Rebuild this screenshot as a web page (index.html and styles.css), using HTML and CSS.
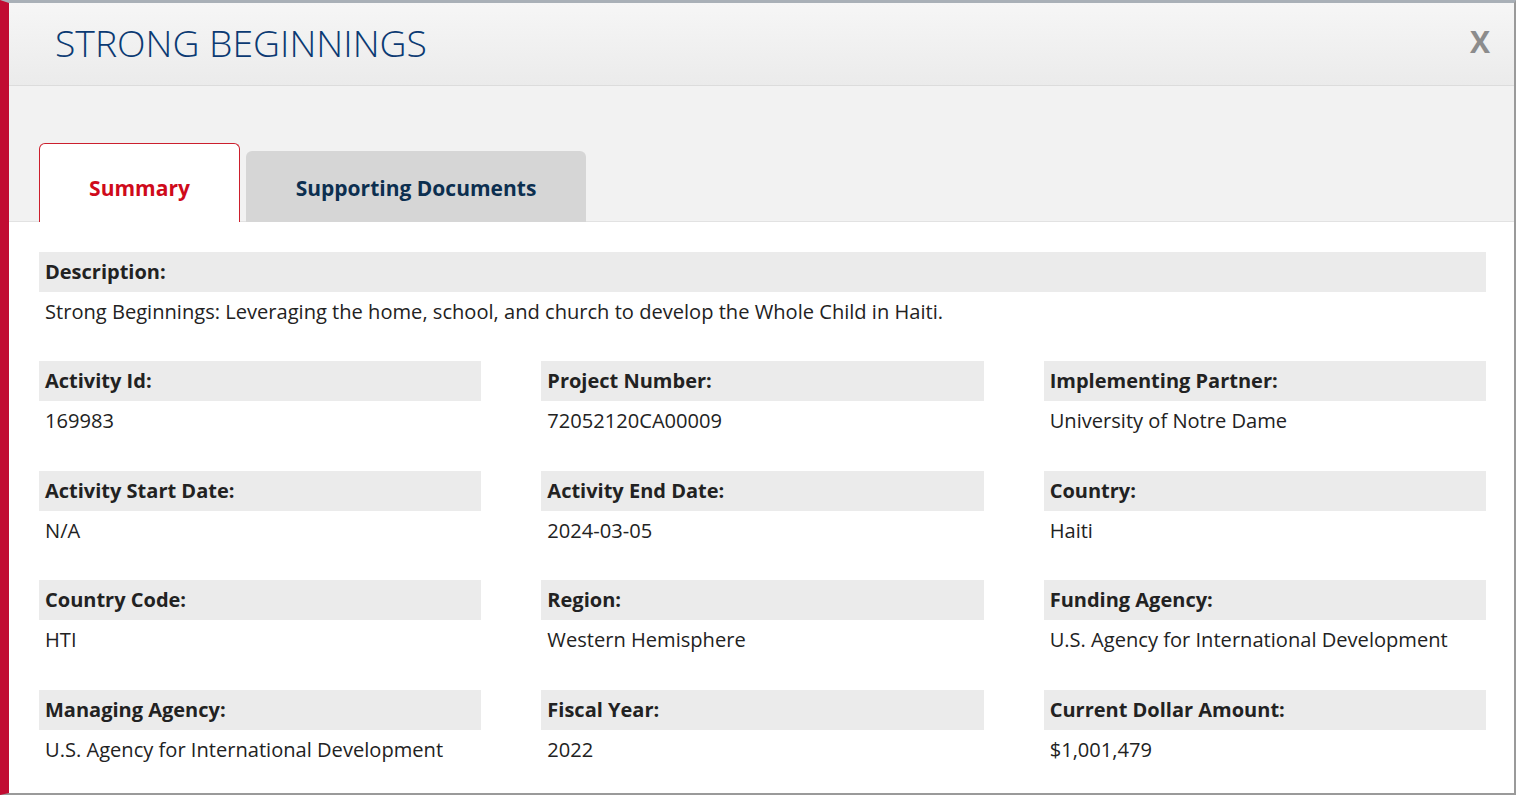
FILE: index.html
```html
<!DOCTYPE html>
<html lang="en">
<head>
    <meta charset="UTF-8">
    <meta name="viewport" content="width=device-width, initial-scale=1.0">
    <title>Strong Beginnings</title>
    <link rel="stylesheet" href="styles.css">
</head>
<body>
    <div class="modal">
        <div class="modal-header">
            <h1>STRONG BEGINNINGS</h1>
            <span class="close-btn">X</span>
        </div>

        <div class="tab-bar">
            <div class="tab active">Summary</div>
            <div class="tab docs">Supporting Documents</div>
        </div>

        <div class="tab-content">
            <div class="field description">
                <div class="field-label">Description:</div>
                <div class="field-value">Strong Beginnings: Leveraging the home, school, and church to develop the Whole Child in Haiti.</div>
            </div>

            <div class="field-grid">
                <div class="field">
                    <div class="field-label">Activity Id:</div>
                    <div class="field-value">169983</div>
                </div>
                <div class="field">
                    <div class="field-label">Project Number:</div>
                    <div class="field-value">72052120CA00009</div>
                </div>
                <div class="field">
                    <div class="field-label">Implementing Partner:</div>
                    <div class="field-value">University of Notre Dame</div>
                </div>

                <div class="field">
                    <div class="field-label">Activity Start Date:</div>
                    <div class="field-value">N/A</div>
                </div>
                <div class="field">
                    <div class="field-label">Activity End Date:</div>
                    <div class="field-value">2024-03-05</div>
                </div>
                <div class="field">
                    <div class="field-label">Country:</div>
                    <div class="field-value">Haiti</div>
                </div>

                <div class="field">
                    <div class="field-label">Country Code:</div>
                    <div class="field-value">HTI</div>
                </div>
                <div class="field">
                    <div class="field-label">Region:</div>
                    <div class="field-value">Western Hemisphere</div>
                </div>
                <div class="field">
                    <div class="field-label">Funding Agency:</div>
                    <div class="field-value">U.S. Agency for International Development</div>
                </div>

                <div class="field">
                    <div class="field-label">Managing Agency:</div>
                    <div class="field-value">U.S. Agency for International Development</div>
                </div>
                <div class="field">
                    <div class="field-label">Fiscal Year:</div>
                    <div class="field-value">2022</div>
                </div>
                <div class="field">
                    <div class="field-label">Current Dollar Amount:</div>
                    <div class="field-value">$1,001,479</div>
                </div>
            </div>
        </div>
    </div>
</body>
</html>
```
FILE: styles.css
```css
* {
    box-sizing: border-box;
}
body {
    margin: 0;
    background-color: #fff;
    font-family: "Open Sans", "Noto Sans", sans-serif;
    color: #222;
}
.modal {
    height: 795px;
    overflow: hidden;
    background-color: #fff;
    border-top: 3px solid #a9b0b7;
    border-left: 9px solid #c10c32;
    border-right: 2px solid #9a9a9a;
    border-bottom: 2px solid #9a9a9a;
}
.modal-header {
    display: flex;
    align-items: center;
    justify-content: space-between;
    height: 83px;
    padding: 0 24px 4px 46px;
    background: linear-gradient(#f6f6f6, #ebebeb);
    border-bottom: 1px solid #dcdcdc;
}
.modal-header h1 {
    margin: 0;
    font-size: 37.3px;
    font-weight: 300;
    color: #0b3a73;
}
.close-btn {
    font-size: 30px;
    font-weight: 700;
    color: #8c8c8c;
    cursor: pointer;
    margin-top: -2px;
}
.tab-bar {
    display: flex;
    align-items: flex-end;
    gap: 6px;
    height: 136px;
    padding-left: 30px;
    background-color: #f2f2f2;
    border-bottom: 1px solid #e2e2e2;
}
.tab {
    display: flex;
    align-items: flex-end;
    justify-content: center;
    font-size: 21px;
    font-weight: 700;
    line-height: 30px;
    padding-bottom: 19px;
    border-radius: 6px 6px 0 0;
    margin-bottom: -1px;
    cursor: pointer;
}
.tab.active {
    width: 201px;
    height: 79px;
    background-color: #fff;
    color: #cf0a1b;
    border: 1px solid #cc1f2d;
    border-bottom: none;
}
.tab.docs {
    width: 340px;
    height: 71px;
    background-color: #d6d6d6;
    color: #0c2f50;
}
.tab-content {
    padding: 30px 28px 0 30px;
}
.field {
    margin-bottom: 36.7px;
}
.field.description {
    margin-bottom: 36px;
}
.field-label {
    height: 40px;
    line-height: 40px;
    padding-left: 6px;
    background-color: #ebebeb;
    font-size: 20px;
    font-weight: 700;
    color: #222;
}
.field-value {
    padding: 6px 6px 0;
    line-height: 27px;
    font-size: 20.1px;
    color: #222;
}
.field-grid {
    display: grid;
    grid-template-columns: repeat(3, 1fr);
    column-gap: 60px;
}
```
